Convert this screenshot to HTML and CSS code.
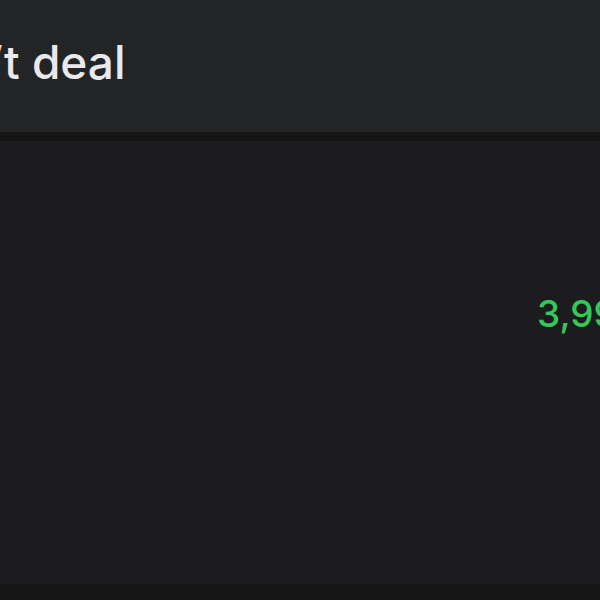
FILE: index.html
```html
<!DOCTYPE html>
<html>
<head lang="en">
    <meta charset="UTF-8">
    <title></title>
    <link rel="stylesheet" href="styles.css">
</head>
<body>
<div class="header">
    <div class="title">Don’t deal</div>
</div>
<div class="content">
    <div class="row">
        <div class="price">3,99 €</div>
    </div>
</div>
<div class="footer"></div>
</body>
</html>
```
FILE: styles.css
```css
* {
    margin: 0;
    padding: 0;
}

html, body {
    height: 100%;
    overflow: hidden;
}

body {
    background-color: #1c1c1e;
    font-family: Inter, "Noto Sans", sans-serif;
    display: flex;
    flex-direction: column;
}

.header {
    height: 132px;
    background-color: #232426;
    border-bottom: 9px solid #151515;
    overflow: hidden;
    white-space: nowrap;
}

.title {
    margin-left: -97px;
    padding-top: 34px;
    font-size: 46px;
    line-height: 56px;
    font-weight: 500;
    color: #e9e9eb;
}

.content {
    flex: 1;
    overflow: hidden;
}

.row {
    display: flex;
    padding-top: 151px;
    white-space: nowrap;
}

.price {
    margin-left: 537px;
    font-size: 37px;
    line-height: 44px;
    font-weight: 500;
    color: #34c759;
}

.footer {
    height: 16px;
    background-color: #151515;
}
```
